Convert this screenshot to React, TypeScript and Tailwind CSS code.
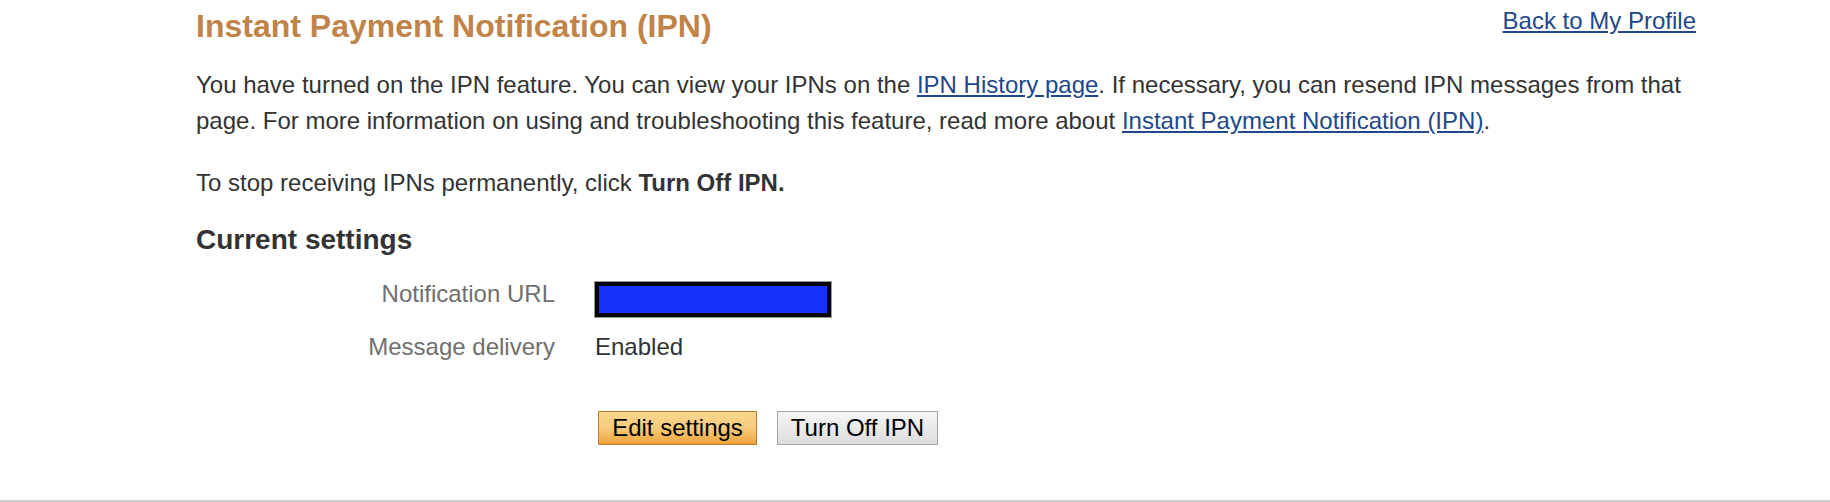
const labelCls = "text-right text-[24px] leading-[28px] text-[#6f6f6f]";

const App = () => {
  return (
    <div className="h-[502px] w-full flex flex-col bg-white font-['Liberation_Sans',Arial,sans-serif] text-[#333]">
      <div className="flex-1 pl-[196px] pr-[134px] pt-[6px]">
        <div className="flex items-start justify-between">
          <h1 className="text-[32px] leading-[40px] font-bold text-[#c08348]">
            Instant Payment Notification (IPN)
          </h1>
          <a href="#" className="mt-[1px] text-[24px] leading-[28px] text-[#21488a] underline">
            Back to My Profile
          </a>
        </div>

        <p className="mt-[21px] w-[1500px] text-[24px] leading-[36px]">
          You have turned on the IPN feature. You can view your IPNs on the{" "}
          <a href="#" className="text-[#21488a] underline">IPN History page</a>. If necessary, you
          can resend IPN messages from that page. For more information on using and
          troubleshooting this feature, read more about{" "}
          <a href="#" className="text-[#21488a] underline">Instant Payment Notification (IPN)</a>.
        </p>

        <p className="mt-[26px] text-[24px] leading-[35px]">
          To stop receiving IPNs permanently, click <strong>Turn Off IPN.</strong>
        </p>

        <h2 className="mt-[23px] text-[28px] leading-[34px] font-bold">Current settings</h2>

        <div className="mt-[23px] grid grid-cols-[359px_1fr] gap-x-[40px] items-start">
          <div className={labelCls}>Notification URL</div>
          <div className="pt-[2px]">
            <div className="h-[35px] w-[236px] border-[4px] border-black bg-[#1533fa] ring-1 ring-[#9a9a9a]" />
          </div>
        </div>

        <div className="mt-[16px] grid grid-cols-[359px_1fr] gap-x-[40px] items-center">
          <div className={labelCls}>Message delivery</div>
          <div className="text-[24px] leading-[28px]">Enabled</div>
        </div>

        <div className="mt-[50px] grid grid-cols-[359px_1fr] gap-x-[40px]">
          <div />
          <div className="flex gap-[20px] pl-[3px]">
            <button className="h-[34px] w-[159px] border border-[#b9822f] bg-gradient-to-b from-[#f9d690] via-[#f6cb7a] to-[#efa33a] text-[24px] leading-[30px] text-black">
              Edit settings
            </button>
            <button className="h-[34px] w-[161px] border border-[#a4a4a4] bg-gradient-to-b from-[#f6f6f6] to-[#dcdcdc] text-[24px] leading-[30px] text-black">
              Turn Off IPN
            </button>
          </div>
        </div>
      </div>
      <div className="h-[2px] w-full bg-[#cfcfcf]" />
    </div>
  );
};

export default App;
